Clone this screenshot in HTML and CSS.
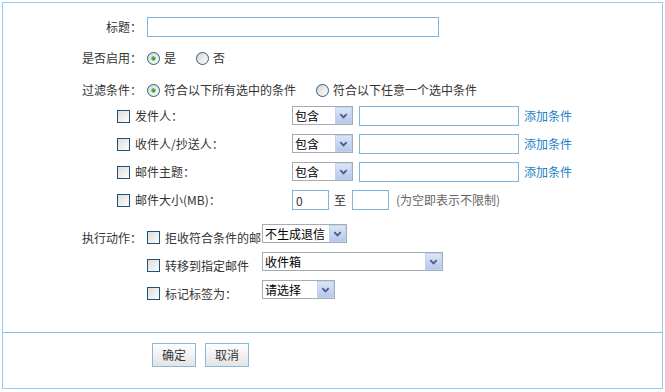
FILE: index.html
```html
<!DOCTYPE html>
<html lang="zh-CN">
<head>
  <meta charset="UTF-8">
  <title>收信规则</title>
  <link rel="stylesheet" href="styles.css">
</head>
<body>
  <div class="panel">
    <div class="rule-form">
      <div class="row">
        <label class="lbl" for="title">标题：</label>
        <input class="txt title-input" id="title" type="text">
      </div>

      <div class="row row-enable">
        <span class="lbl">是否启用：</span>
        <label class="opt"><input type="radio" name="enable" checked><span>是</span></label>
        <label class="opt"><input type="radio" name="enable"><span>否</span></label>
      </div>

      <div class="row row-filter">
        <span class="lbl">过滤条件：</span>
        <label class="opt"><input type="radio" name="match" checked><span>符合以下所有选中的条件</span></label>
        <label class="opt"><input type="radio" name="match"><span>符合以下任意一个选中条件</span></label>
      </div>

      <div class="row cond cond-first">
        <input type="checkbox">
        <span class="cond-name">发件人：</span>
        <span class="sel sel-op"><select><option>包含</option></select><span class="arr"><svg width="9" height="6" viewBox="0 0 9 6"><path d="M1.3 1.2 4.5 4.4 7.7 1.2" fill="none" stroke="#4a5c80" stroke-width="1.8"/></svg></span></span>
        <input class="txt cond-input" type="text">
        <a class="add" href="#">添加条件</a>
      </div>

      <div class="row cond">
        <input type="checkbox">
        <span class="cond-name">收件人/抄送人：</span>
        <span class="sel sel-op"><select><option>包含</option></select><span class="arr"><svg width="9" height="6" viewBox="0 0 9 6"><path d="M1.3 1.2 4.5 4.4 7.7 1.2" fill="none" stroke="#4a5c80" stroke-width="1.8"/></svg></span></span>
        <input class="txt cond-input" type="text">
        <a class="add" href="#">添加条件</a>
      </div>

      <div class="row cond">
        <input type="checkbox">
        <span class="cond-name">邮件主题：</span>
        <span class="sel sel-op"><select><option>包含</option></select><span class="arr"><svg width="9" height="6" viewBox="0 0 9 6"><path d="M1.3 1.2 4.5 4.4 7.7 1.2" fill="none" stroke="#4a5c80" stroke-width="1.8"/></svg></span></span>
        <input class="txt cond-input" type="text">
        <a class="add" href="#">添加条件</a>
      </div>

      <div class="row cond">
        <input type="checkbox">
        <span class="cond-name">邮件大小(MB)：</span>
        <input class="txt num" type="text" value="0">
        <span class="to">至</span>
        <input class="txt num" type="text">
        <span class="hint">(为空即表示不限制)</span>
      </div>

      <div class="row act act-first">
        <div class="act-left">
          <span class="lbl">执行动作：</span>
          <input type="checkbox">
          <span class="act-name">拒收符合条件的邮</span>
        </div>
        <span class="sel sel-reject"><select><option>不生成退信</option></select><span class="arr"><svg width="9" height="6" viewBox="0 0 9 6"><path d="M1.3 1.2 4.5 4.4 7.7 1.2" fill="none" stroke="#4a5c80" stroke-width="1.8"/></svg></span></span>
      </div>

      <div class="row act">
        <div class="act-left">
          <span class="lbl"></span>
          <input type="checkbox">
          <span class="act-name">转移到指定邮件</span>
        </div>
        <span class="sel sel-folder"><select><option>收件箱</option></select><span class="arr"><svg width="9" height="6" viewBox="0 0 9 6"><path d="M1.3 1.2 4.5 4.4 7.7 1.2" fill="none" stroke="#4a5c80" stroke-width="1.8"/></svg></span></span>
      </div>

      <div class="row act">
        <div class="act-left">
          <span class="lbl"></span>
          <input type="checkbox">
          <span class="act-name">标记标签为：</span>
        </div>
        <span class="sel sel-tag"><select><option>请选择</option></select><span class="arr"><svg width="9" height="6" viewBox="0 0 9 6"><path d="M1.3 1.2 4.5 4.4 7.7 1.2" fill="none" stroke="#4a5c80" stroke-width="1.8"/></svg></span></span>
      </div>
    </div>

    <div class="bar">
      <button class="btn" type="button">确定</button>
      <button class="btn" type="button">取消</button>
    </div>
  </div>
</body>
</html>
```

FILE: styles.css
```css
body { margin: 0; background: #fff; color: #333; font: 12px/14px "Noto Sans CJK SC", "Liberation Sans", sans-serif; }
.panel { margin: 2px; width: 661px; height: 387px; box-sizing: border-box; border: 1px solid #93cbf2; }
.rule-form { height: 330px; box-sizing: border-box; padding-top: 14px; border-bottom: 1px solid #7fbde6; }

.row { display: flex; align-items: center; height: 20px; }
.row-enable { margin-top: 11px; }
.row-filter { margin-top: 12px; }
.cond { margin-top: 8px; padding-left: 114px; }
.cond-first { margin-top: 6px; }
.act { margin-top: 8px; align-items: flex-start; }
.act-first { margin-top: 14px; }

.lbl { width: 139px; margin-right: 5px; text-align: right; white-space: nowrap; flex: none; }

.txt { box-sizing: border-box; height: 20px; margin: 0; padding: 0 3px; border: 1px solid #7db5df; font: inherit; color: #333; background: #fff; outline: none; }
.title-input { width: 292px; }
.cond-input { width: 160px; margin-left: 6px; align-self: flex-start; }
.num { width: 37px; align-self: flex-start; }

input[type=checkbox], input[type=radio] { appearance: none; -webkit-appearance: none; box-sizing: border-box; width: 13px; height: 13px; margin: 0; flex: none; }
input[type=checkbox] { border: 1px solid #1c5180; background: linear-gradient(135deg, #dcdcd7, #fdfdfc); }
input[type=radio] { border: 1px solid #2c5a8c; border-radius: 50%; background: linear-gradient(135deg, #d6d6d0, #fff); }
input[type=radio]:checked { background: radial-gradient(circle, #2aa82a 0, #3fbf3f 1.8px, transparent 2.6px), linear-gradient(135deg, #d6d6d0, #fff); }

.opt { display: flex; align-items: center; }
.opt span { margin-left: 4px; }
.opt + .opt { margin-left: 20px; }

.cond-name { width: 157px; margin-left: 5px; white-space: nowrap; }
.add { margin-left: 5px; color: #1b7fc6; text-decoration: none; }
.to { margin: 0 6px 0 5px; }
.hint { margin-left: 7px; color: #666; }

.sel { display: inline-flex; box-sizing: border-box; height: 19px; border: 1px solid #a5acb5; background: #fff; flex: none; align-self: flex-start; }
.sel select { appearance: none; -webkit-appearance: none; flex: 1; min-width: 0; height: 17px; margin: 0; padding: 0 0 0 2px; border: 0; background: transparent; font: inherit; color: #000; outline: none; }
.sel .arr { display: flex; align-items: center; justify-content: center; width: 17px; height: 17px; box-sizing: border-box; border: 1px solid #c4d2ec; background: linear-gradient(#dae5f9, #b4c7eb); }
.sel-op { width: 61px; }
.sel-reject { width: 85px; }
.sel-folder { width: 181px; }
.sel-tag { width: 73px; }

.act-left { display: flex; align-items: center; height: 13px; margin-top: 7px; }
.act-name { width: 97px; margin-left: 5px; white-space: nowrap; }

.bar { display: flex; gap: 9px; padding: 10px 0 0 149px; }
.btn { box-sizing: border-box; width: 44px; height: 24px; padding: 0; border: 1px solid #86b9de; background: linear-gradient(#fff, #e3e3e3); font: inherit; color: #333; cursor: pointer; }
```
